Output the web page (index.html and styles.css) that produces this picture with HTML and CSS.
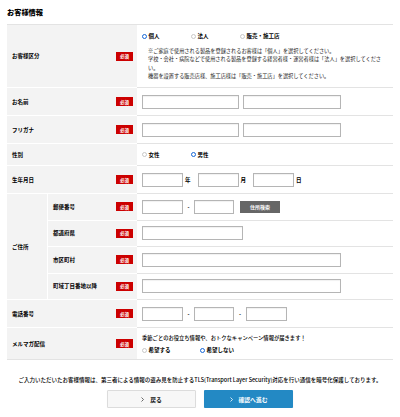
FILE: index.html
```html
<!DOCTYPE html>
<html lang="ja">
<head>
<meta charset="utf-8">
<title>お客様情報</title>
<link rel="stylesheet" href="styles.css">
</head>
<body>
<div class="page">
  <h1 class="title">お客様情報</h1>
  <div class="form">
    <div class="th main"><span class="label">お客様区分</span><span class="req">必須</span></div>
    <div class="td stack type-td">
      <div class="opts">
        <span class="opt"><span class="radio on"></span>個人</span>
        <span class="opt"><span class="radio"></span>法人</span>
        <span class="opt"><span class="radio"></span>販売・施工店</span>
      </div>
      <p class="note">※ご家庭で使用される製品を登録されるお客様は「個人」を選択してください。<br>学校・会社・病院などで使用される製品を登録する経営者様・運営者様は「法人」を選択してください。<br>機器を設置する販売店様、施工店様は「販売・施工店」を選択してください。</p>
    </div>

    <div class="th main"><span class="label">お名前</span><span class="req">必須</span></div>
    <div class="td pair"><input class="in w97" type="text"><input class="in w98" type="text"></div>

    <div class="th main"><span class="label">フリガナ</span><span class="req">必須</span></div>
    <div class="td pair"><input class="in w97" type="text"><input class="in w98" type="text"></div>

    <div class="th main"><span class="label">性別</span></div>
    <div class="td">
      <div class="opts">
        <span class="opt"><span class="radio"></span>女性</span>
        <span class="opt"><span class="radio on"></span>男性</span>
      </div>
    </div>

    <div class="th main"><span class="label">生年月日</span><span class="req">必須</span></div>
    <div class="td">
      <input class="in w41" type="text"><span class="unit">年</span>
      <input class="in w41" type="text"><span class="unit">月</span>
      <input class="in w41" type="text"><span class="unit">日</span>
    </div>

    <div class="th parent"><span class="label">ご住所</span></div>
    <div class="th sub"><span class="label">郵便番号</span><span class="req">必須</span></div>
    <div class="td subtd">
      <input class="in w41" type="text"><span class="sep">-</span><input class="in w40" type="text"><span class="search">住所検索</span>
    </div>
    <div class="th sub"><span class="label">都道府県</span><span class="req">必須</span></div>
    <div class="td subtd"><input class="in w101" type="text"></div>
    <div class="th sub"><span class="label">市区町村</span><span class="req">必須</span></div>
    <div class="td subtd"><input class="in w199" type="text"></div>
    <div class="th sub"><span class="label">町域丁目番地以降</span><span class="req">必須</span></div>
    <div class="td subtd"><input class="in w199" type="text"></div>

    <div class="th main"><span class="label">電話番号</span><span class="req">必須</span></div>
    <div class="td">
      <input class="in w41" type="text"><span class="sep">-</span><input class="in w40" type="text"><span class="sep wide">-</span><input class="in w41" type="text">
    </div>

    <div class="th main last"><span class="label">メルマガ配信</span><span class="req">必須</span></div>
    <div class="td stack mail-td last">
      <p class="mailtext">季節ごとのお役立ち情報や、おトクなキャンペーン情報が届きます！</p>
      <div class="opts wide">
        <span class="opt"><span class="radio"></span>希望する</span>
        <span class="opt"><span class="radio on"></span>希望しない</span>
      </div>
    </div>
  </div>

  <p class="privacy">ご入力いただいたお客様情報は、第三者による情報の盗み見を防止するTLS(Transport Layer Security)対応を行い通信を暗号化保護しております。</p>

  <div class="buttons">
    <span class="btn back"><svg class="chev" width="3" height="5" viewBox="0 0 3 5"><polyline points="0.5,0.5 2.5,2.5 0.5,4.5" fill="none" stroke="#444" stroke-width="0.8"/></svg>戻る</span>
    <span class="btn next"><svg class="chev" width="3" height="5" viewBox="0 0 3 5"><polyline points="0.5,0.5 2.5,2.5 0.5,4.5" fill="none" stroke="#fff" stroke-width="0.8"/></svg>確認へ進む</span>
  </div>
</div>
</body>
</html>
```

FILE: styles.css
```css
* { box-sizing: border-box; }

body {
  margin: 0;
  background: #fff;
  color: #111;
  font-family: "Noto Sans CJK JP", "Noto Sans", sans-serif;
}

.page {
  padding: 7px 7px 0;
}

.title {
  font-size: 7.2px;
  line-height: 10px;
  font-weight: 900;
  color: #000;
  margin: 0 0 7px;
}

.form {
  display: grid;
  grid-template-columns: 41px 89px 256px;
  border-top: 1px solid #e3e3e3;
}

.th {
  background: #f3f3f3;
  border-bottom: 1px solid #fff;
  display: flex;
  align-items: center;
  justify-content: space-between;
  padding: 0 4px 0 5px;
  font-size: 5.5px;
  line-height: 8px;
  font-weight: bold;
  color: #000;
}

.th.main { grid-column: 1 / 3; }
.th.parent { grid-column: 1; grid-row: span 4; border-right: 1px solid #fff; }
.th.sub { grid-column: 2; }
.th.last { border-bottom-color: #e3e3e3; }

.req {
  background: #cc0000;
  color: #fff;
  font-size: 4.5px;
  width: 17px;
  height: 9px;
  display: flex;
  align-items: center;
  justify-content: center;
  font-weight: bold;
}

.td {
  grid-column: 3;
  border-bottom: 1px solid #e3e3e3;
  padding: 6.5px 9px 6.5px 5px;
  display: flex;
  align-items: center;
}

.td.subtd { padding-top: 5.75px; padding-bottom: 5.75px; }

.td.stack {
  flex-direction: column;
  align-items: flex-start;
}

.td.type-td { padding-top: 7px; padding-bottom: 7px; }

.td.mail-td { padding-top: 6px; padding-bottom: 5px; gap: 4px; }

.td.pair { gap: 4px; }

.in {
  flex: none;
  height: 14px;
  margin: 0;
  padding: 0;
  border: 1px solid #b5b5b5;
  background: #fff;
  box-shadow: inset 0 1px 1px rgba(0, 0, 0, 0.06);
  font-size: 6px;
}

.w40 { width: 40px; }
.w41 { width: 41px; }
.w97 { width: 97px; }
.w98 { width: 98px; }
.w101 { width: 101px; }
.w199 { width: 199px; }

.unit {
  font-size: 5.5px;
  font-weight: bold;
  color: #000;
  margin: 0 7px 0 2px;
  line-height: 8px;
}

.sep {
  width: 11px;
  text-align: center;
  font-size: 5.5px;
  font-weight: bold;
  color: #000;
  line-height: 8px;
}

.sep.wide { width: 12px; }

.search {
  margin-left: 6px;
  width: 40px;
  height: 12px;
  background: #666;
  color: #fff;
  font-size: 5px;
  font-weight: bold;
  display: flex;
  align-items: center;
  justify-content: center;
}

.opts {
  display: flex;
  font-size: 5.5px;
  line-height: 8px;
  font-weight: bold;
  color: #000;
}

.opt {
  width: 49px;
  display: flex;
  align-items: center;
}

.opts.wide .opt { width: 58px; }

.radio {
  width: 5px;
  height: 5px;
  border: 0.8px solid #c8c8c8;
  border-radius: 50%;
  background: #fff;
  margin-right: 1.5px;
  flex: none;
}

.radio.on {
  border: 1.5px solid #1767d6;
}

.note {
  margin: 7px 0 0 6px;
  width: 236px;
  font-size: 5.2px;
  line-height: 8.3px;
  color: #1a1a1a;
}

.mailtext {
  margin: 0;
  font-size: 5.3px;
  line-height: 8px;
  font-weight: 500;
  color: #000;
}

.privacy {
  margin: 16px 0 6px;
  text-align: center;
  font-size: 5.5px;
  line-height: 8px;
  font-weight: 500;
  color: #000;
  white-space: nowrap;
}

.buttons {
  display: flex;
  justify-content: center;
  gap: 8px;
}

.btn {
  width: 89px;
  height: 18px;
  display: flex;
  align-items: center;
  justify-content: center;
  gap: 6px;
  font-size: 5.8px;
  font-weight: bold;
  border-radius: 1px;
}

.btn.back {
  background: #f7f7f7;
  border: 1px solid #dcdcdc;
  color: #111;
  box-shadow: 0 1px 1px rgba(0, 0, 0, 0.06);
}

.btn.next {
  background: #2389c4;
  color: #fff;
  box-shadow: 0 1px 1px rgba(0, 0, 0, 0.15);
}

.chev { flex: none; }
```
